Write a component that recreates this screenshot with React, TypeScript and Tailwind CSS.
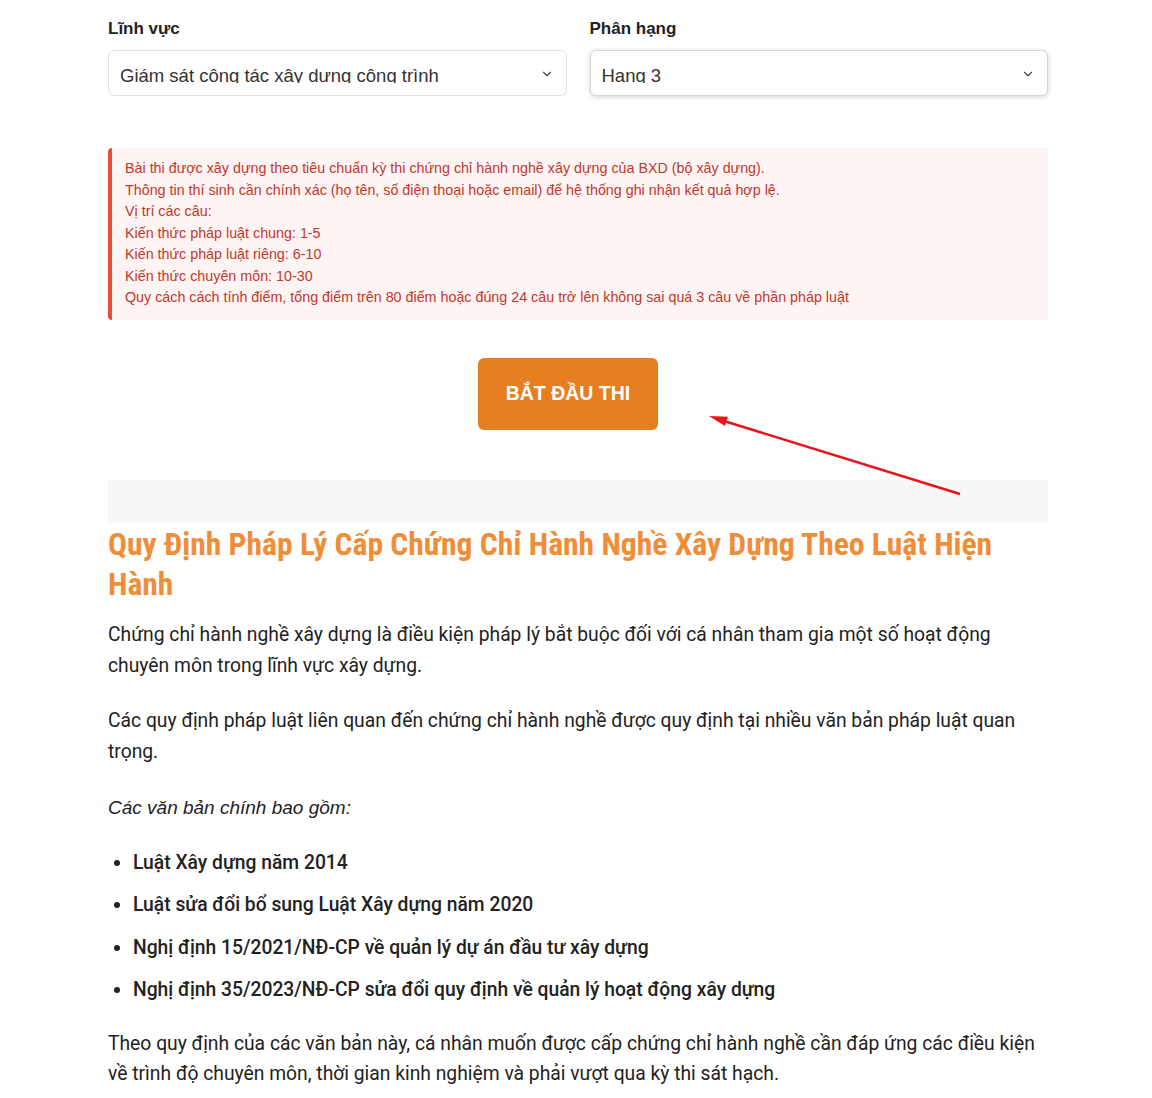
import { ChevronDown } from "lucide-react"

const info = [
  "Bài thi được xây dựng theo tiêu chuẩn kỳ thi chứng chỉ hành nghề xây dựng của BXD (bộ xây dựng).",
  "Thông tin thí sinh cần chính xác (họ tên, số điện thoại hoặc email) để hệ thống ghi nhận kết quả hợp lệ.",
  "Vị trí các câu:",
  "Kiến thức pháp luật chung: 1-5",
  "Kiến thức pháp luật riêng: 6-10",
  "Kiến thức chuyên môn: 10-30",
  "Quy cách cách tính điểm, tổng điểm trên 80 điểm hoặc đúng 24 câu trở lên không sai quá 3 câu về phần pháp luật",
]

const docs = [
  "Luật Xây dựng năm 2014",
  "Luật sửa đổi bổ sung Luật Xây dựng năm 2020",
  "Nghị định 15/2021/NĐ-CP về quản lý dự án đầu tư xây dựng",
  "Nghị định 35/2023/NĐ-CP sửa đổi quy định về quản lý hoạt động xây dựng",
]

function SelectBox({ label, value, focused }: { label: string; value: string; focused?: boolean }) {
  return (
    <div className="flex flex-col">
      <label className="mb-[12px] text-[17px] leading-[19px] font-bold text-[#222]">{label}</label>
      <div
        className={
          focused
            ? "relative h-[46px] rounded-[6px] border border-[#d6d6d6] bg-white px-[11px] shadow-[0_1px_5px_rgba(0,0,0,0.18)]"
            : "relative h-[46px] rounded-[6px] border border-[#e2e2e2] bg-white px-[11px]"
        }
      >
        {/* the site's select clips the descenders, keep it that way */}
        <div className="mt-[15px] h-[17px] overflow-hidden text-[18.5px] leading-[20px] text-[#333]">{value}</div>
        <ChevronDown className="absolute right-[12px] top-[16px] h-[14px] w-[14px] text-[#444]" strokeWidth={2} />
      </div>
    </div>
  )
}

export default function App() {
  return (
    <div className="min-h-[1098px] bg-white" style={{ fontFamily: '"Liberation Sans", Arial, sans-serif' }}>
      <div className="relative ml-[108px] w-[940px] pt-[19px]">
        <div className="grid grid-cols-2 gap-[23px]">
          <SelectBox label="Lĩnh vực" value="Giám sát công tác xây dựng công trình" />
          <SelectBox label="Phân hạng" value="Hạng 3" focused />
        </div>

        <div className="mt-[52px] rounded-[4px] border-l-[4px] border-[#e74c3c] bg-[#fff4f4] pt-[10px] pb-[11px] pl-[13px] text-[14.3px] leading-[21.5px] text-[#c0392b]">
          {info.map((line) => (
            <div key={line}>{line}</div>
          ))}
        </div>

        <div className="mt-[38px] pl-[370px]">
          <button className="h-[72px] w-[180px] rounded-[6px] bg-[#e67e22] text-[19.5px] font-bold text-white">
            BẮT ĐẦU THI
          </button>
        </div>

        <svg className="absolute left-[592px] top-[400px]" width="270" height="100" viewBox="0 0 270 100">
          <line x1="260" y1="94" x2="24" y2="21" stroke="#e8141b" strokeWidth="2.5" />
          <polygon points="9,16 28,16.8 25,26" fill="#e8141b" />
        </svg>

        <div className="mt-[50px] h-[43px] bg-[#f8f8f8]" />

        <h2
          className="mt-[2px] text-[31.6px] leading-[40px] font-bold text-[#ef8d38] font-stretch-condensed"
          style={{ fontFamily: '"Roboto Condensed", Roboto, sans-serif' }}
        >
          Quy Định Pháp Lý Cấp Chứng Chỉ Hành Nghề Xây Dựng Theo Luật Hiện Hành
        </h2>

        <div className="mt-[14px] text-[19.3px] leading-[31px] text-[#222]" style={{ fontFamily: "Roboto, sans-serif" }}>
          <p className="mb-[24.5px]">
            Chứng chỉ hành nghề xây dựng là điều kiện pháp lý bắt buộc đối với cá nhân tham gia một số hoạt động chuyên
            môn trong lĩnh vực xây dựng.
          </p>
          <p className="mb-[24.5px]">
            Các quy định pháp luật liên quan đến chứng chỉ hành nghề được quy định tại nhiều văn bản pháp luật quan
            trọng.
          </p>
          <p className="mb-[24.5px] text-[19px] italic" style={{ fontFamily: '"Liberation Sans", Arial, sans-serif' }}>
            Các văn bản chính bao gồm:
          </p>
          <ul className="mb-[24.5px] list-disc pl-[25px]">
            {docs.map((d) => (
              <li key={d} className="mb-[11.3px] font-medium">
                {d}
              </li>
            ))}
          </ul>
          <p className="leading-[30px]">
            Theo quy định của các văn bản này, cá nhân muốn được cấp chứng chỉ hành nghề cần đáp ứng các điều kiện về
            trình độ chuyên môn, thời gian kinh nghiệm và phải vượt qua kỳ thi sát hạch.
          </p>
        </div>
      </div>
    </div>
  )
}
